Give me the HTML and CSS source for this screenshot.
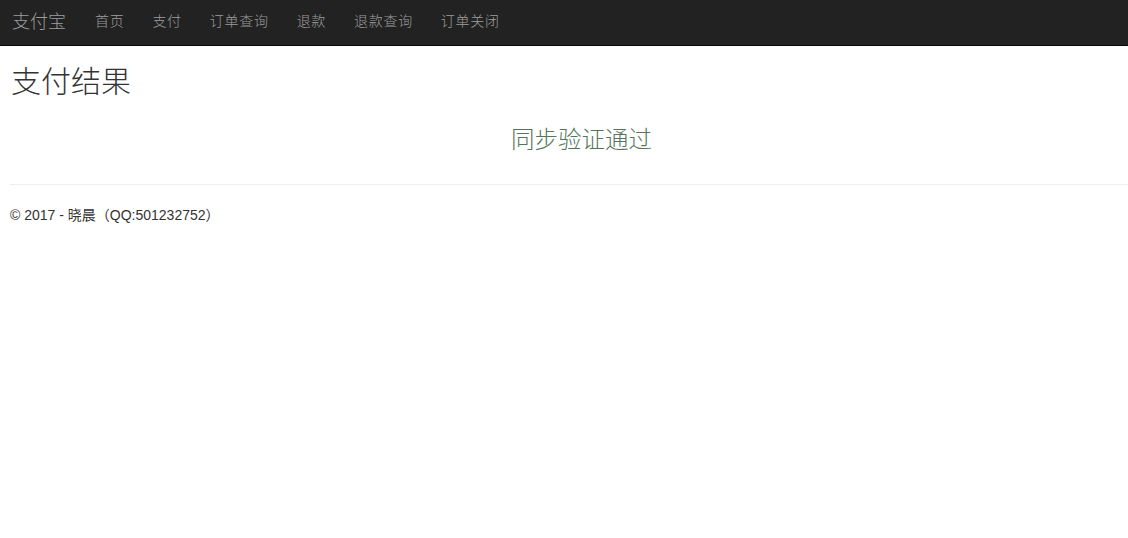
FILE: index.html
```html
<!DOCTYPE html>
<html lang="zh-CN">
<head>
<meta charset="utf-8">
<title>支付结果</title>
<link rel="stylesheet" href="styles.css">
</head>
<body>
<nav class="navbar">
  <a class="brand" href="#">支付宝</a>
  <ul class="nav">
    <li><a href="#">首页</a></li>
    <li><a href="#">支付</a></li>
    <li><a href="#">订单查询</a></li>
    <li><a href="#">退款</a></li>
    <li><a href="#">退款查询</a></li>
    <li><a href="#">订单关闭</a></li>
  </ul>
</nav>
<main class="content">
  <h2 class="title">支付结果</h2>
  <h3 class="result">同步验证通过</h3>
  <hr class="rule">
  <footer class="footer">
    <p>© 2017 - 晓晨（QQ:501232752）</p>
  </footer>
</main>
</body>
</html>
```

FILE: styles.css
```css
* { box-sizing: border-box; }
html, body { margin: 0; padding: 0; }
body {
  font-family: "Liberation Sans", "Noto Sans CJK SC", sans-serif;
  font-size: 14px;
  line-height: 1.42857;
  color: #333;
  background: #fff;
}
.navbar {
  display: flex;
  align-items: flex-start;
  height: 46px;
  background: #222;
  border-bottom: 1px solid #080808;
  padding: 10px 0 0 12px;
}
.brand {
  font-family: "Noto Sans CJK SC", sans-serif;
  font-size: 18px;
  font-weight: 300;
  color: #9d9d9d;
  text-decoration: none;
  line-height: 20px;
  padding-right: 15px;
}
.nav {
  display: flex;
  list-style: none;
  margin: 0;
  padding: 0;
}
.nav a {
  display: block;
  font-family: "Noto Sans CJK SC", sans-serif;
  font-weight: 300;
  font-size: 14px;
  letter-spacing: 0.7px;
  line-height: 20px;
  padding: 0 14px;
  color: #9d9d9d;
  text-decoration: none;
}
.content {
  padding-left: 10px;
}
.title {
  font-family: "Noto Sans CJK SC", sans-serif;
  font-weight: 300;
  font-size: 30px;
  line-height: 33px;
  margin: 17px 0 0 1px;
  color: #333;
}
.result {
  font-family: "Noto Sans CJK SC", sans-serif;
  font-weight: 300;
  font-size: 23.5px;
  line-height: 26px;
  margin: 29px 0 0;
  padding-left: 25px;
  text-align: center;
  color: #55755a;
}
.rule {
  border: 0;
  border-top: 1px solid #eee;
  margin: 33px 0 0;
}
.footer p {
  margin: 20px 0 0;
  font-size: 14px;
  line-height: 20px;
  color: #333;
}
```
